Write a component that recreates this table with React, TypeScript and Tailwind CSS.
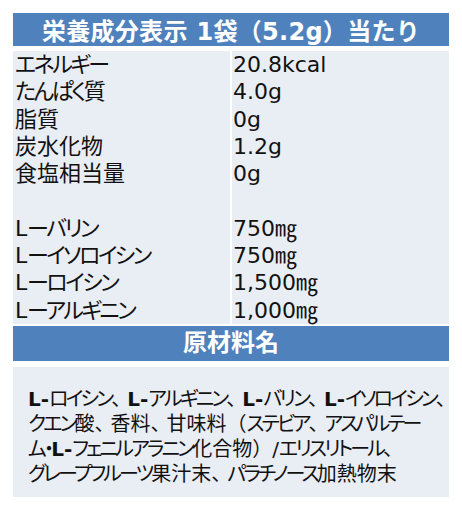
const font = "font-['DejaVu_Sans','Noto_Sans_CJK_JP',sans-serif]";

const nutrients: [string, string][] = [
  ['エネルギー', '20.8kcal'],
  ['たんぱく質', '4.0g'],
  ['脂質', '0g'],
  ['炭水化物', '1.2g'],
  ['食塩相当量', '0g'],
  ['', ''],
  ['Lーバリン', '750㎎'],
  ['Lーイソロイシン', '750㎎'],
  ['Lーロイシン', '1,500㎎'],
  ['Lーアルギニン', '1,000㎎'],
];

const ingredients = [
  'L-ロイシン、L-アルギニン、L-バリン、L-イソロイシン、',
  'クエン酸、香料、甘味料（ステビア、アスパルテー',
  'ム・L-フェニルアラニン化合物）/エリスリトール、',
  'グレープフルーツ果汁末、パラチノース加熱物末',
];

// kana runs are set tighter than kanji, as in the original font
function Label({ text, kana }: { text: string; kana: string }) {
  const parts = text.split(/([\u3040-\u30ff]+)/);
  return (
    <>
      {parts.map((p, i) =>
        /^[\u3040-\u30ff]+$/.test(p) ? (
          <span key={i} className={`[font-feature-settings:'palt'] ${kana}`}>
            {p}
          </span>
        ) : (
          <span key={i}>{p}</span>
        )
      )}
    </>
  );
}

function Ingredient({ text }: { text: string }) {
  const parts = text.split(/(L-|、|[\u3040-\u30ff]+)/).filter(Boolean);
  return (
    <>
      {parts.map((p, i) => {
        if (p === 'L-') return <span key={i} className="font-bold">{p}</span>;
        if (p === '、') return <span key={i} className="tracking-[-4px]">{p}</span>;
        if (/^[\u3040-\u30ff]+$/.test(p))
          return (
            <span key={i} className="[font-feature-settings:'palt'] tracking-[-2.8px]">
              {p}
            </span>
          );
        return <span key={i}>{p}</span>;
      })}
    </>
  );
}

export default function App() {
  return (
    <div className={`w-[462px] h-[511px] bg-white px-[13px] pt-[13px] text-[#111] ${font}`}>
      <div className="h-[33px] pt-[4px] bg-[#4f81bd] flex items-center justify-center text-white font-bold text-[24px] tracking-[0.3px] whitespace-nowrap">
        栄養成分表示 1袋（5.2g）当たり
      </div>

      <div className="mt-[5px] grid grid-cols-[217px_1fr] gap-x-[2px] text-[22px]">
        <div className="bg-[#e9edf4] flex flex-col pl-[2px]">
          {nutrients.map((n, i) => (
            <div key={i} className="h-[27.3px] leading-[27.3px] whitespace-nowrap">
              <Label text={n[0]} kana="tracking-[-2.5px]" />
            </div>
          ))}
        </div>
        <div className="bg-[#e9edf4] flex flex-col pl-[1px]">
          {nutrients.map((n, i) => (
            <div key={i} className="h-[27.3px] leading-[27.3px] whitespace-nowrap">
              {n[1]}
            </div>
          ))}
        </div>
      </div>

      <div className="mt-[2px] h-[35px] bg-[#4f81bd] flex items-center justify-center text-white font-bold text-[24px]">
        原材料名
      </div>

      <div className="mt-[6px] h-[130px] bg-[#e9edf4] pl-[15px] pt-[20px] text-[20px] leading-[25px]">
        {ingredients.map((line, i) => (
          <div key={i} className="whitespace-nowrap">
            <Ingredient text={line} />
          </div>
        ))}
      </div>
    </div>
  );
}
